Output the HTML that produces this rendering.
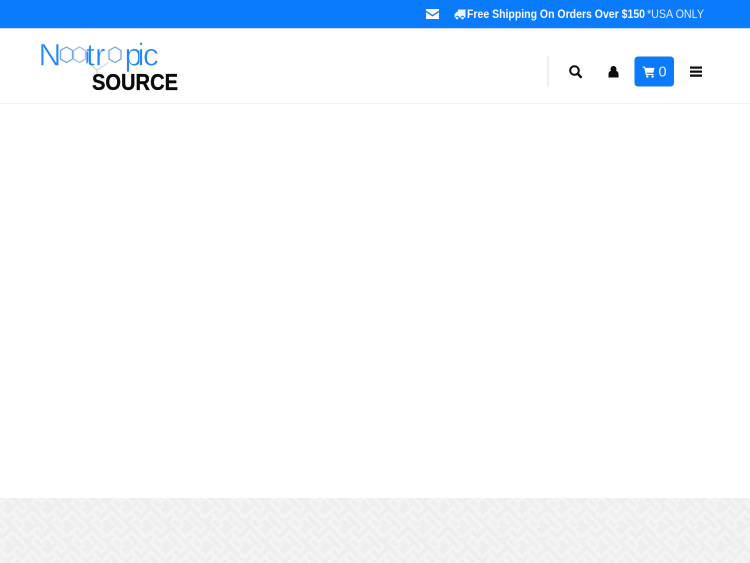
<!DOCTYPE html>
<html lang="en">
<head>
<meta charset="utf-8">
<title>Nootropic Source</title>
<style>
html,body{margin:0;padding:0;width:750px;height:563px;overflow:hidden;background:#fff;font-family:"Liberation Sans",sans-serif}
svg{position:absolute;left:0;top:0;display:block}
</style>
</head>
<body>
<svg width="750" height="563" viewBox="0 0 750 563" xmlns="http://www.w3.org/2000/svg">
  <defs>
    <pattern id="maze" width="28" height="28" patternUnits="userSpaceOnUse" patternTransform="rotate(45)">
      <rect width="28" height="28" fill="#eeeeee"/>
      <g fill="none" stroke="#f4f4f4" stroke-width="3">
        <path d="M0 3.500H14V10.500H7V17.500H21V3.500H28M0 24.500H7V17.500M14 17.500V24.500H28M21 10.500H28M0 10.500H3M3.500 28V24.500M24.500 24.500V17.500"/>
      </g>
    </pattern>
  </defs>

  <!-- top bar -->
  <rect width="750" height="28" fill="#0a7bfd"/>
  <rect y="28" width="750" height="1" fill="#c4defc"/>
  <!-- envelope -->
  <path d="M426 9h13v1.600l-6.500 4.300-6.500-4.300z M426 12.300l6.500 4.200 6.500-4.200v6.700h-13z" fill="#fff"/>
  <!-- truck -->
  <path d="M458 9.500h7.500v8h-1.200a1.800 1.800 0 0 0-3.600 0h-1.500a1.800 1.800 0 0 0-3.600 0h-1v-3.500l2.400-2.400h1z" fill="#eaf3ff"/>
  <circle cx="457" cy="18" r="1.300" fill="#eaf3ff"/>
  <circle cx="462.500" cy="18" r="1.300" fill="#eaf3ff"/>
  <text x="467" y="18" font-size="12" font-weight="700" fill="#f4f9ff" textLength="178" lengthAdjust="spacingAndGlyphs">Free Shipping On Orders Over $150</text>
  <text x="647" y="18" font-size="12" fill="#dcebff" textLength="57" lengthAdjust="spacingAndGlyphs">*USA ONLY</text>

  <!-- header border -->
  <rect y="103" width="750" height="1" fill="#f3f3f3"/>

  <!-- logo -->
  <text font-size="31.500" y="65.500" fill="#1f86fb" stroke="#fff" stroke-width=".5" x="38.500 59 73 86 95 108 124.500 137.500 143">Nootropic</text>
  <g fill="#fff" stroke="none">
    <rect x="59" y="44" width="27.500" height="24"/>
    <rect x="107" y="44" width="17" height="24"/>
  </g>
  <g fill="none" stroke-width="1.300">
    <path d="M66.500 47l6 3.500v8.500l-6 3.500-6-3.500v-8.500z" stroke="#6aa8f0"/>
    <path d="M79.500 47l6 3.500v8.500l-6 3.500-6-3.500v-8.500z" stroke="#a3bcd8"/>
    <path d="M115 47l6 3.500v8.500l-6 3.500-6-3.500v-8.500z" stroke="#6aa8f0"/>
    <path d="M92 66l5 4 11-7M97 70v6" stroke="#d5d5d5"/>
  </g>
  <text x="92" y="90" font-size="23.500" font-weight="700" fill="#0a0a0a" stroke="#0a0a0a" stroke-width=".3" textLength="86" lengthAdjust="spacingAndGlyphs">SOURCE</text>

  <!-- divider -->
  <rect x="547" y="56" width="2" height="31" fill="#f0f0f0"/>

  <!-- search -->
  <g fill="none" stroke="#0d0d0d">
    <circle cx="574.500" cy="70.500" r="4.300" stroke-width="2"/>
    <path d="M577.800 73.800l3 3.200" stroke-width="2.500" stroke-linecap="round"/>
  </g>
  <!-- user -->
  <path d="M613.500 66a3 3.200 0 1 1-.01 0zM608.500 77.500v-3.200c0-2 1-3.200 2.600-3.400a4 4 0 0 0 4.800 0c1.600.2 2.600 1.400 2.600 3.400v3.200z" fill="#0d0d0d"/>

  <!-- cart button -->
  <rect x="634.500" y="56.500" width="39.500" height="30" rx="3.500" fill="#0a7bfd"/>
  <path d="M642.500 66.500h2.400l.4 1.400h9.200l-1.200 4.800h-6.800l.3 1.200h6.600v1.100h-7.600l-1.700-7.400h-1.600z" fill="#fff"/>
  <circle cx="647.300" cy="76.500" r="1.200" fill="#fff"/>
  <circle cx="652.600" cy="76.500" r="1.200" fill="#fff"/>
  <text x="658.500" y="76.500" font-size="14.500" fill="#eaf3ff">0</text>

  <!-- hamburger -->
  <path d="M690 66.500h12v2.200h-12zM690 70.500h12v2.200h-12zM690 74.500h12v2.200h-12z" fill="#0d0d0d"/>

  <!-- footer pattern -->
  <rect y="498" width="750" height="65" fill="url(#maze)"/>
</svg>
</body>
</html>
